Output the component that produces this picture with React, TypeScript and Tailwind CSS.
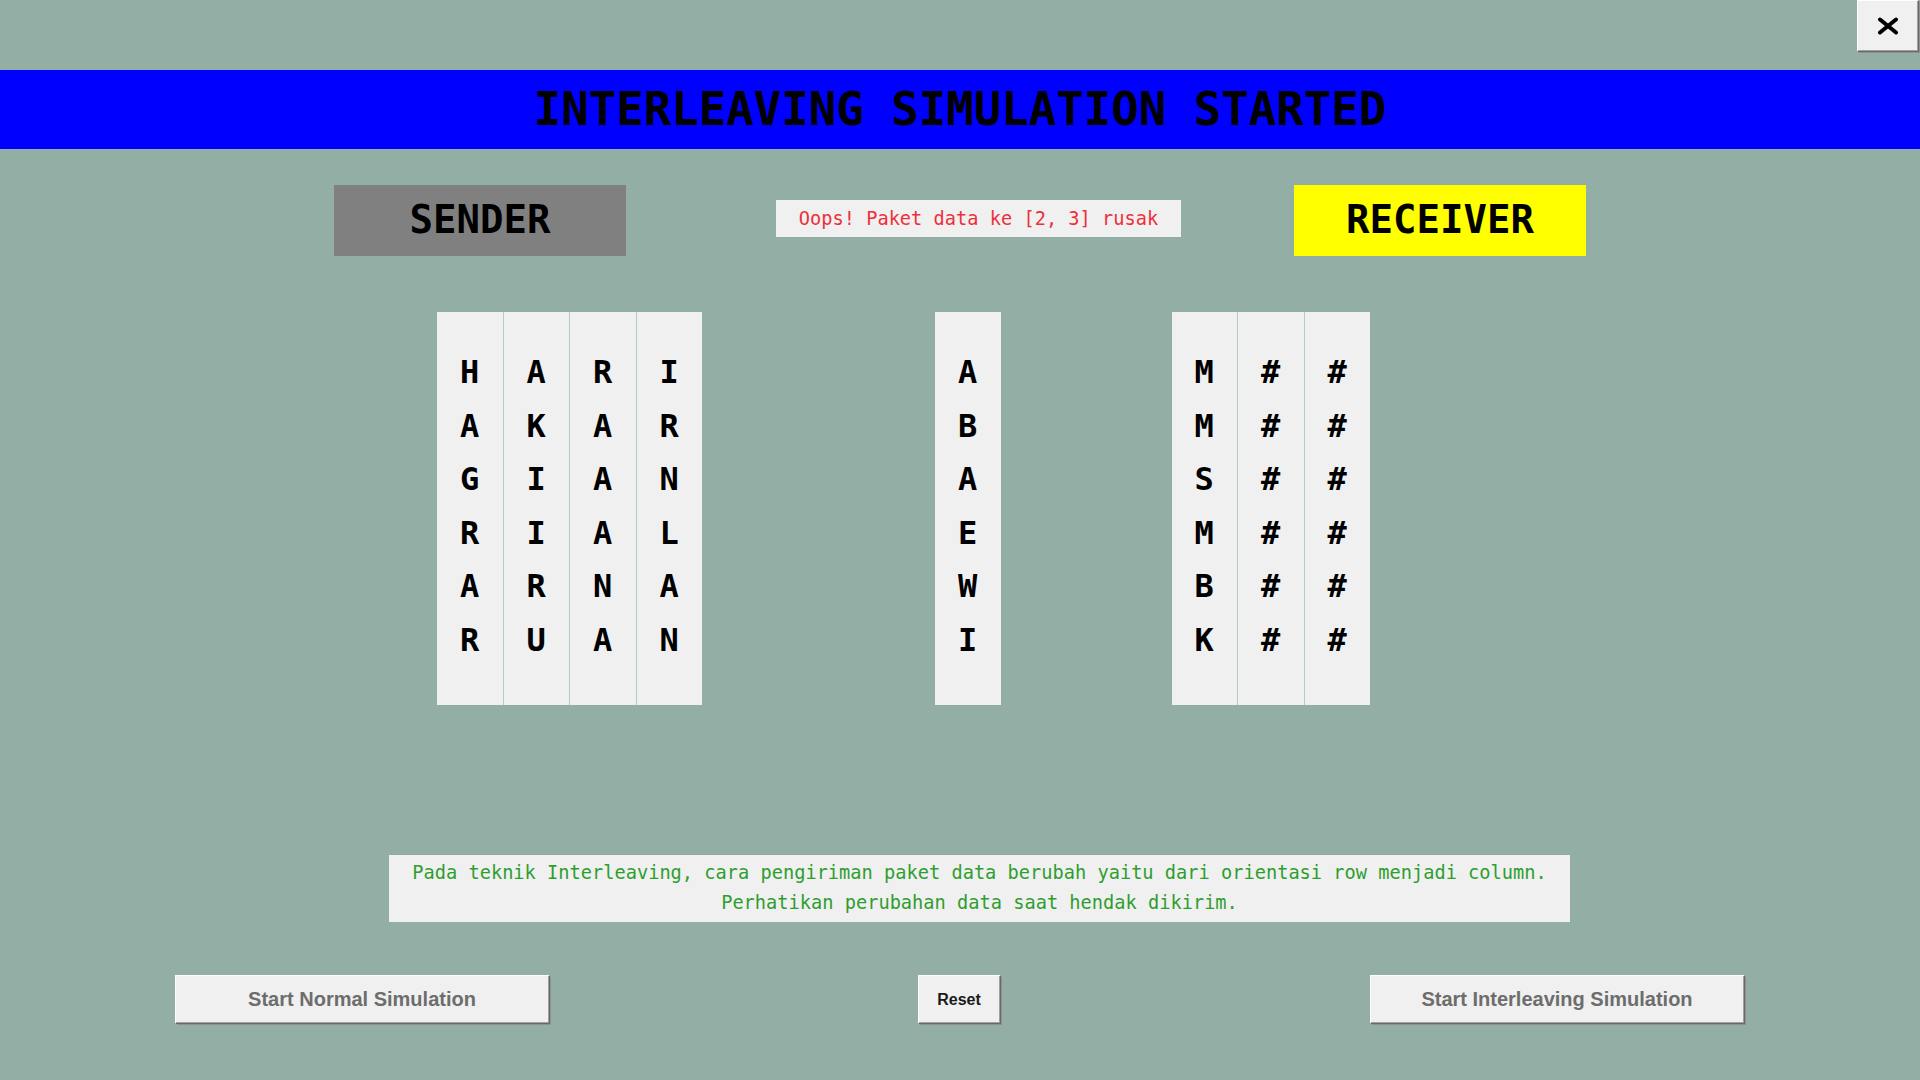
import React from "react";

const mono = { fontFamily: '"DejaVu Sans Mono", "Liberation Mono", monospace' } as const;
const sans = { fontFamily: '"Liberation Sans", Arial, sans-serif' } as const;

const sender = [
  ["H", "A", "G", "R", "A", "R"],
  ["A", "K", "I", "I", "R", "U"],
  ["R", "A", "A", "A", "N", "A"],
  ["I", "R", "N", "L", "A", "N"],
];
const middle = [["A", "B", "A", "E", "W", "I"]];
const receiver = [
  ["M", "M", "S", "M", "B", "K"],
  ["#", "#", "#", "#", "#", "#"],
  ["#", "#", "#", "#", "#", "#"],
];

function Column({ letters }: { letters: string[] }) {
  return (
    <div
      className="w-[65.5px] h-[393px] bg-[#f0f0f0] pt-[34px] flex flex-col items-center text-[32px] leading-[53.6px] font-bold text-black"
      style={mono}
    >
      {letters.map((l, i) => (
        <div key={i}>{l}</div>
      ))}
    </div>
  );
}

function Grid({ cols }: { cols: string[][] }) {
  return (
    <div className="flex gap-px bg-[#b6cbc3]">
      {cols.map((c, i) => (
        <Column key={i} letters={c} />
      ))}
    </div>
  );
}

const btnShadow =
  "shadow-[inset_1px_1px_0_#ffffff,inset_-1px_-1px_0_#a0a0a0,1px_1px_0_#696969,2px_2px_0_#8f8f8f]";

export default function App() {
  return (
    <div className="w-[1920px] h-[1080px] bg-[#93afa5] flex flex-col overflow-hidden">
      <div className="h-[70px] flex justify-end items-start pr-[2px]">
        <button
          className={`w-[61px] h-[51px] bg-[#f0f0f0] flex items-center justify-center ${btnShadow}`}
        >
          <svg width="22" height="18" viewBox="0 0 22 18">
            <path
              d="M3 2.5 L19 15.5 M19 2.5 L3 15.5"
              stroke="#000"
              strokeWidth="4"
              strokeLinecap="round"
              fill="none"
            />
          </svg>
        </button>
      </div>
      <div className="h-[79px] bg-[#0000ff] flex items-center justify-center">
        <span className="text-[45.7px] font-bold text-black leading-none" style={mono}>
          INTERLEAVING SIMULATION STARTED
        </span>
      </div>
      <div className="flex items-start mt-[36px] pl-[334px]">
        <div
          className="w-[292px] h-[71px] bg-[#808080] flex items-center justify-center text-[39px] font-bold text-black"
          style={mono}
        >
          SENDER
        </div>
        <div
          className="ml-[150px] mt-[15px] w-[405px] h-[37px] bg-[#f0f0f0] flex items-center justify-center text-[18.67px] text-[#ee2f3b]"
          style={mono}
        >
          Oops! Paket data ke [2, 3] rusak
        </div>
        <div
          className="ml-[113px] w-[292px] h-[71px] bg-[#ffff00] flex items-center justify-center text-[39px] font-bold text-black"
          style={mono}
        >
          RECEIVER
        </div>
      </div>
      <div className="flex items-start mt-[56px] pl-[437px]">
        <Grid cols={sender} />
        <div className="ml-[233px]">
          <Grid cols={middle} />
        </div>
        <div className="ml-[171px]">
          <Grid cols={receiver} />
        </div>
      </div>
      <div className="mt-[150px] pl-[389px]">
        <div
          className="w-[1181px] h-[67px] bg-[#f0f0f0] pt-[3px] text-center text-[18.67px] leading-[30px] text-[#2e9e2e]"
          style={mono}
        >
          <div>Pada teknik Interleaving, cara pengiriman paket data berubah yaitu dari orientasi row menjadi column.</div>
          <div>Perhatikan perubahan data saat hendak dikirim.</div>
        </div>
      </div>
      <div className="mt-[53px] flex items-start pl-[175px]">
        <button
          className={`w-[374px] h-[48px] bg-[#f0f0f0] text-[20px] font-bold text-[#6d6d6d] ${btnShadow}`}
          style={sans}
        >
          Start Normal Simulation
        </button>
        <button
          className={`ml-[369px] w-[82px] h-[48px] bg-[#f0f0f0] pt-[2px] text-[16px] font-bold text-[#1a1a1a] ${btnShadow}`}
          style={sans}
        >
          Reset
        </button>
        <button
          className={`ml-[370px] w-[374px] h-[48px] bg-[#f0f0f0] text-[20px] font-bold text-[#6d6d6d] ${btnShadow}`}
          style={sans}
        >
          Start Interleaving Simulation
        </button>
      </div>
    </div>
  );
}
